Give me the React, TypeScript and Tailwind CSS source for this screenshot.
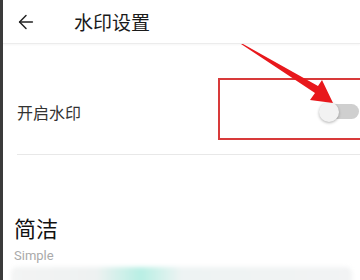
import { ArrowLeft } from 'lucide-react'

const cjk = '"Noto Sans CJK SC", "Noto Sans", sans-serif'

export default function App() {
    return (
        <div className="w-[360px] h-[280px] flex overflow-hidden bg-white relative" style={{ fontFamily: cjk }}>
            <div className="w-[3px] h-full bg-[#3b3b3b] shrink-0" />
            <div className="flex-1 flex flex-col">
                <header className="h-[44px] shrink-0 flex items-center border-b border-[#ececec] shadow-[0_1px_2px_rgba(0,0,0,0.04)]">
                    <ArrowLeft className="ml-[12px] text-[#222]" size={22} strokeWidth={1.6} />
                    <h1 className="ml-[37px] text-[19px] text-[#1a1a1a] leading-none">水印设置</h1>
                </header>

                <div className="h-[111px] shrink-0 flex items-start justify-between pt-[59px] ml-[14px] border-b border-[#e8e8e8]">
                    <span className="text-[16px] text-[#333] leading-none pt-[1px]">开启水印</span>
                    <div className="relative w-[40px] h-[20px] mr-[1px] -mt-[1px]">
                        <div className="absolute left-[10px] right-0 top-[2px] h-[15px] rounded-full bg-[#cfcfcf]" />
                        <div className="absolute left-0 top-0 w-[20px] h-[20px] rounded-full bg-[#f2f2f2] shadow-[0_1px_3px_rgba(0,0,0,0.3)]" />
                    </div>
                </div>

                <div className="pl-[11px] pt-[61px] shrink-0">
                    <div className="text-[22px] text-[#111] leading-none">简洁</div>
                    <div className="mt-[11px] text-[13px] text-[#aaa] leading-none" style={{ fontFamily: 'Roboto, sans-serif' }}>Simple</div>
                </div>
                <div className="mt-[5px] mx-[8px] h-[22px] shrink-0 rounded-t-[6px] bg-[linear-gradient(90deg,#f3f4f4_0%,#eef1f1_25%,#b8efe4_38%,#eef3f3_50%,#f2f3f4_100%)] blur-[2px]" />
            </div>

            {/* annotation overlay */}
            <div className="absolute left-[218px] top-[78px] w-[150px] h-[62px] border-2 border-[#d83a3a]" />
            <svg className="absolute left-0 top-0" width="360" height="280" viewBox="0 0 360 280">
                <polygon points="241,44 243,44 318,86 322,80 333,103 310,100 315,93" fill="#e8181c" />
            </svg>
        </div>
    )
}
